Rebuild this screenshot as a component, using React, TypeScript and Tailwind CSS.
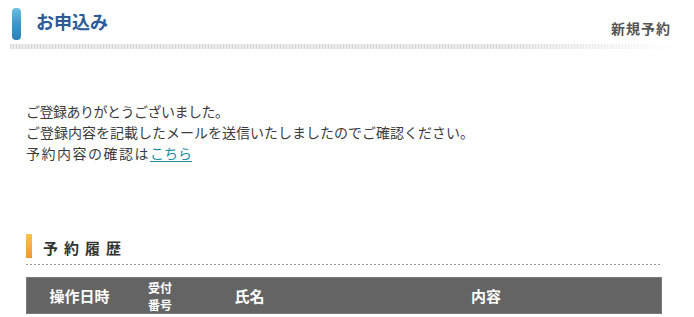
import React from "react";

export default function App() {
  return (
    <div
      className="w-[694px] h-[317px] bg-white overflow-hidden"
      style={{ fontFamily: '"Noto Sans CJK JP", "Noto Sans", sans-serif' }}
    >
      {/* Page header */}
      <div className="flex items-start justify-between pl-3 pr-[23px] pt-2 h-[36px]">
        <div className="flex items-start">
          <div className="w-[9px] h-8 rounded-[4px] bg-[linear-gradient(180deg,#6cc0e2_0%,#3a9ccd_45%,#2a7fb8_100%)]" />
          <h1 className="ml-[15px] text-[18px] font-bold leading-[26px] text-[#2d5a98]">
            お申込み
          </h1>
        </div>
        <div className="mt-[11px] text-[14px] font-bold tracking-[1px] leading-[18px] text-[#555555]">
          新規予約
        </div>
      </div>
      <div className="ml-[10px] mt-2 w-[664px] h-[5px] bg-[repeating-linear-gradient(90deg,#d6d6d6_0_1px,#ededed_1px_3px)] [mask-image:linear-gradient(to_right,#000_75%,transparent)]" />

      {/* Message */}
      <div className="pl-[26px] mt-[52px] text-[14px] leading-[21px] text-[#3c3c3c]">
        <p className="tracking-[-0.5px]">ご登録ありがとうございました。</p>
        <p>ご登録内容を記載したメールを送信いたしましたのでご確認ください。</p>
        <p>
          <span className="tracking-[1.5px]">予約内容の確認は</span>
          <a href="#" className="text-[#1f8e9e] underline underline-offset-2">
            こちら
          </a>
        </p>
      </div>

      {/* Section heading */}
      <div className="ml-[26px] mt-[70px] flex items-center h-[24px]">
        <div className="w-[6px] h-[24px] bg-[linear-gradient(180deg,#f9c24a_0%,#f29a26_100%)]" />
        <h2 className="ml-[11px] pt-[3px] text-[15px] font-bold tracking-[6px] leading-[20px] text-[#333333]">
          予約履歴
        </h2>
      </div>
      <div className="ml-[26px] mt-[6px] w-[636px] h-px bg-[repeating-linear-gradient(90deg,#9a9a9a_0_2px,transparent_2px_4px)]" />

      {/* Table header */}
      <div className="ml-[26px] mt-3 w-[636px] h-[37px] bg-[#646464] border border-[#7a7a7a] grid grid-cols-[105px_56px_123px_1fr] items-center text-white font-bold">
        <div className="text-center text-[15px] leading-[18px]">操作日時</div>
        <div className="flex flex-col items-center text-[12px] leading-[17px]">
          <span>受付</span>
          <span>番号</span>
        </div>
        <div className="text-center text-[15px] leading-[18px]">氏名</div>
        <div className="text-center text-[15px] leading-[18px]">内容</div>
      </div>
    </div>
  );
}
